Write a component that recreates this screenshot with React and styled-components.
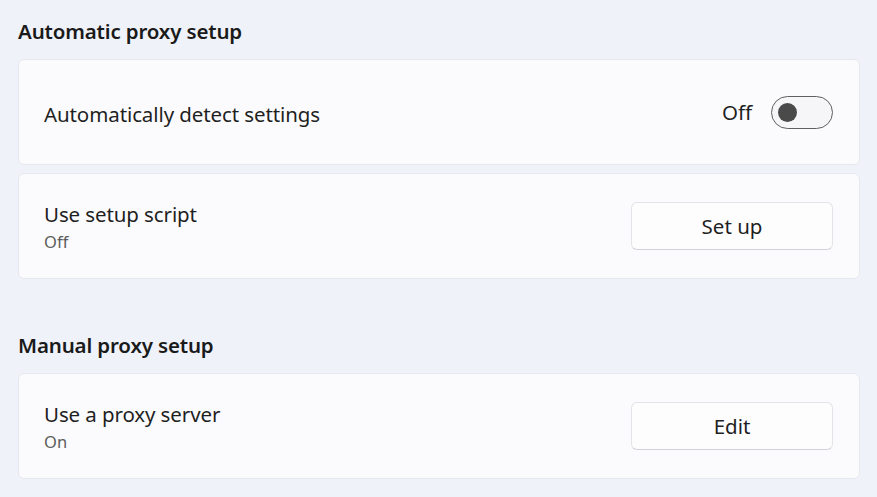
import React from "react";
import styled, { createGlobalStyle } from "styled-components";

const Global = createGlobalStyle`
  html, body { margin: 0; padding: 0; background: #eff2f9; }
  body { font-family: "Noto Sans", "Open Sans", sans-serif; color: #1b1b1b; }
`;

const Page = styled.div`
  width: 877px;
  height: 497px;
  box-sizing: border-box;
  padding: 18px 18px 0 18px;
  display: flex;
  flex-direction: column;
  overflow: hidden;
`;

const Section = styled.section`
  display: flex;
  flex-direction: column;
  gap: 8px;
  margin-bottom: ${(p) => p.$after || 0}px;
`;

const Heading = styled.h2`
  margin: 0 0 15px 0;
  font-size: 20.5px;
  line-height: 26px;
  font-weight: 600;
  color: #1a1a1a;
  letter-spacing: -0.15px;
`;

const Card = styled.div`
  height: 106px;
  box-sizing: border-box;
  width: 842px;
  background: #fbfbfd;
  border: 1px solid #e6e8ee;
  border-radius: 6px;
  display: flex;
  align-items: center;
  justify-content: space-between;
  padding: 0 26px 0 25px;
`;

const Labels = styled.div`
  display: flex;
  flex-direction: column;
  margin-top: 4px;
`;

const Title = styled.div`
  font-size: 20.5px;
  line-height: 28px;
  color: #1f1f1f;
  letter-spacing: -0.1px;
  margin-top: ${(p) => (p.$solo ? 3 : 0)}px;
`;

const Sub = styled.div`
  font-size: 16.5px;
  line-height: 28px;
  color: #5c5c5c;
`;

const Right = styled.div`
  display: flex;
  align-items: center;
  gap: 19px;
`;

const State = styled.span`
  font-size: 20.5px;
  color: #1f1f1f;
`;

const Toggle = styled.div`
  width: 62px;
  height: 33px;
  box-sizing: border-box;
  border: 1.5px solid #5f5f5f;
  border-radius: 17px;
  background: #f6f6f8;
  display: flex;
  align-items: center;
  padding-left: 6px;
`;

const Knob = styled.div`
  width: 19px;
  height: 19px;
  border-radius: 50%;
  background: #4a4a4a;
`;

const Button = styled.button`
  width: 202px;
  height: 48px;
  box-sizing: border-box;
  background: #fdfdfe;
  border: 1px solid #e3e4e8;
  border-bottom-color: #d2d3d8;
  border-radius: 6px;
  font-family: inherit;
  font-size: 20.5px;
  color: #1f1f1f;
  cursor: pointer;
`;

export default function App() {
  return (
    <>
      <Global />
      <Page>
        <Heading>Automatic proxy setup</Heading>
        <Section $after={53}>
          <Card>
            <Title $solo>Automatically detect settings</Title>
            <Right>
              <State>Off</State>
              <Toggle>
                <Knob />
              </Toggle>
            </Right>
          </Card>
          <Card>
            <Labels>
              <Title>Use setup script</Title>
              <Sub>Off</Sub>
            </Labels>
            <Button>Set up</Button>
          </Card>
        </Section>
        <Heading>Manual proxy setup</Heading>
        <Section>
          <Card>
            <Labels>
              <Title>Use a proxy server</Title>
              <Sub>On</Sub>
            </Labels>
            <Button>Edit</Button>
          </Card>
        </Section>
      </Page>
    </>
  );
}
